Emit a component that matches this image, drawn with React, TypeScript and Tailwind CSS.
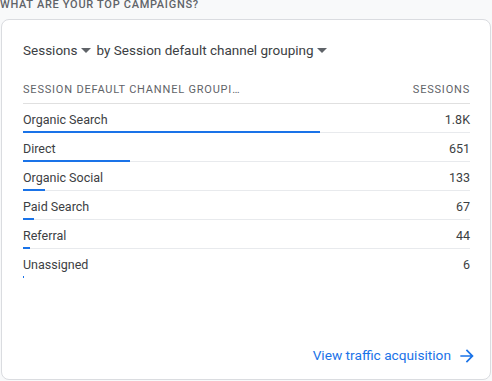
import React from 'react';

const rows = [
    { name: 'Organic Search', value: '1.8K', width: 297 },
    { name: 'Direct', value: '651', width: 107 },
    { name: 'Organic Social', value: '133', width: 22 },
    { name: 'Paid Search', value: '67', width: 11 },
    { name: 'Referral', value: '44', width: 7 },
    { name: 'Unassigned', value: '6', width: 1 },
];

const Caret = () => (
    <svg width="10" height="5" viewBox="0 0 10 5" className="mx-[3px]">
        <path d="M0 0l5 5 5-5z" fill="#5f6368" />
    </svg>
);

export default function App() {
    return (
        <div className="w-[492px] h-[381px] overflow-hidden bg-[#f8f9fa]" style={{ fontFamily: 'Roboto, "Liberation Sans", sans-serif' }}>
            <div className="mt-[-2px] h-[14px] text-[11px] leading-[14px] tracking-[0.7px] font-medium text-[#5f6368] uppercase">
                What are your top campaigns?
            </div>
            <div className="ml-[1px] mt-[7px] w-[490px] h-[361px] bg-white border border-[#dadce0] rounded-[8px] flex flex-col pl-[21px] pr-[20px]">
                <div className="flex items-center mt-[20px] h-[20px] text-[13.5px] text-[#3c4043]">
                    <span>Sessions</span>
                    <Caret />
                    <span className="ml-[3px]">by Session default channel grouping</span>
                    <Caret />
                </div>
                <div className="mt-[23px] flex justify-between border-b border-[#e0e0e0] h-[21px] text-[11px] leading-[14px] tracking-[0.8px] text-[#5f6368] uppercase">
                    <span>Session default channel groupi…</span>
                    <span>Sessions</span>
                </div>
                {rows.map((r, i) => (
                    <div key={r.name} className={i < rows.length - 1 ? 'border-b border-[#e8eaed]' : ''}>
                        <div className="pt-[6px] flex justify-between h-[26px] text-[12.5px] leading-[20px] text-[#3c4043]">
                            <span>{r.name}</span>
                            <span>{r.value}</span>
                        </div>
                        <div className="mt-[1px] mb-[-1px] h-[2px] bg-[#1a73e8]" style={{ width: r.width }} />
                    </div>
                ))}
                <div className="mt-auto mb-[13px] flex justify-end items-center text-[13.7px] text-[#1a73e8]">
                    <span>View traffic acquisition</span>
                    <svg width="20" height="20" viewBox="0 0 24 24" className="ml-[6px] mr-[-7px]">
                        <path d="M12 4l-1.41 1.41L16.17 11H4v2h12.17l-5.58 5.59L12 20l8-8z" fill="#1a73e8" />
                    </svg>
                </div>
            </div>
        </div>
    );
}
